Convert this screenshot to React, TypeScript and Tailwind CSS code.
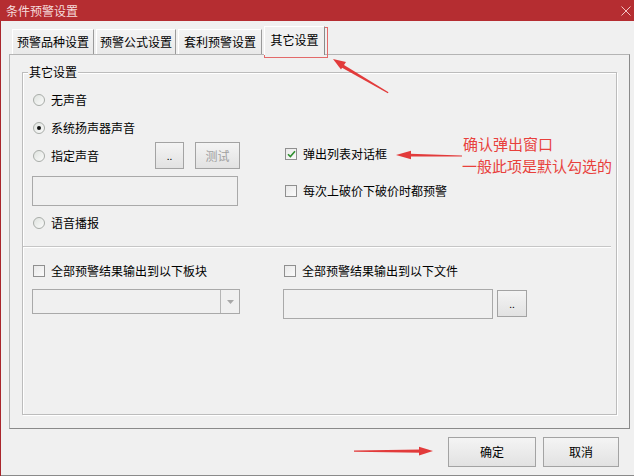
import React from 'react';

const font = "font-['Noto_Sans_CJK_SC','Microsoft_YaHei',sans-serif]";

function Radio({ label, checked = false }: { label: string; checked?: boolean }) {
  return (
    <div className="flex h-[20px] items-center gap-[6px]">
      <span className="flex h-[12px] w-[12px] items-center justify-center rounded-full border border-[#a8aca8] bg-linear-to-br from-[#dfe3df] to-[#fbfbfb]">
        {checked && <span className="h-[4px] w-[4px] rounded-full bg-[#111]" />}
      </span>
      <span>{label}</span>
    </div>
  );
}

function Check({ label, checked = false }: { label: string; checked?: boolean }) {
  return (
    <div className="flex h-[20px] items-center gap-[6px]">
      <span className="flex h-[12px] w-[12px] items-center justify-center border border-[#8f8f8f] bg-linear-to-br from-[#e9e9e9] to-[#fafafa]">
        {checked && (
          <svg width="9" height="8" viewBox="0 0 9 8">
            <path d="M1 4.2 L3.4 6.6 L8 1.2" fill="none" stroke="#2f8f2f" strokeWidth="1.6" />
          </svg>
        )}
      </span>
      <span>{label}</span>
    </div>
  );
}

function Btn({ children, className = '', disabled = false }: { children: React.ReactNode; className?: string; disabled?: boolean }) {
  return (
    <div
      className={`flex items-center justify-center border border-[#a3a3a3] bg-linear-to-b from-[#f4f4f4] to-[#e2e2e2] ${
        disabled ? 'text-[#a0a0a0]' : 'text-black'
      } ${className}`}
    >
      {children}
    </div>
  );
}

const tabs = [
  { name: '预警品种设置', w: 'w-[82px]' },
  { name: '预警公式设置', w: 'w-[80px]' },
  { name: '套利预警设置', w: 'w-[84px]' },
];

export default function App() {
  return (
    <div className={`relative flex h-[476px] w-[634px] flex-col overflow-hidden bg-[#f0f0f0] text-[12px] leading-[16px] text-black shadow-[inset_1px_0_0_#a9262c,inset_0_-1px_0_#8a8a8a] ${font}`}>
      {/* title bar */}
      <div className="flex h-[21px] items-center justify-between bg-[#b52d31] pl-[6px] pr-[2px]">
        <span className="text-[#f6dcdc]">条件预警设置</span>
        <svg width="10" height="10" viewBox="0 0 10 10" className="mr-[1px]">
          <path d="M0.5 0.5 L9.5 9.5 M9.5 0.5 L0.5 9.5" stroke="#f2c4c4" strokeWidth="1" />
        </svg>
      </div>

      {/* tabs */}
      <div className="flex h-[33px] items-end gap-[2px] pl-[12px]">
        {tabs.map((t) => (
          <div
            key={t.name}
            className={`flex h-[25px] ${t.w} items-center justify-center border-l border-r border-t border-l-white border-r-[#9a9a9a] border-t-white bg-linear-to-b from-[#f3f3f3] to-[#e9e9e9]`}
          >
            {t.name}
          </div>
        ))}
        <div className="relative z-10 mb-[-1px] flex h-[29px] w-[61px] items-center justify-center border-l border-r border-t border-l-white border-r-[#8a8a8a] border-t-white bg-[#f0f0f0] pb-[2px]">
          其它设置
        </div>
      </div>

      {/* tab panel */}
      <div className="ml-[9px] h-[375px] w-[621px] border border-[#b4b4b4] border-r-[#8a8a8a] border-b-[#8a8a8a] pl-[12px] pr-[12px] pt-[17px]">
        <div className="relative h-[343px] border border-[#bcbcbc] pl-[10px] pt-[17px] shadow-[inset_1px_1px_0_#fff,1px_1px_0_#fff]">
          <span className="absolute left-[5px] top-[-9px] bg-[#f0f0f0] px-[1px]">其它设置</span>

          <div className="flex">
            <div className="flex w-[252px] flex-col">
              <Radio label="无声音" />
              <div className="mt-[8px]">
                <Radio label="系统扬声器声音" checked />
              </div>
              <div className="mt-[4px] flex h-[27px] items-center">
                <div className="w-[122px]">
                  <Radio label="指定声音" />
                </div>
                <Btn className="h-[27px] w-[29px] text-[10px]">..</Btn>
                <Btn className="ml-[11px] h-[27px] w-[45px]" disabled>
                  测试
                </Btn>
              </div>
              <div className="ml-[-1px] mt-[7px] h-[30px] w-[206px] border border-[#a9a9a9] bg-[#f0f0f0]" />
              <div className="mt-[7px]">
                <Radio label="语音播报" />
              </div>
            </div>
            <div className="flex flex-col pt-[54px]">
              <Check label="弹出列表对话框" checked />
              <div className="mt-[17px]">
                <Check label="每次上破价下破价时都预警" />
              </div>
            </div>
          </div>

          <div className="ml-[-10px] mt-[13px] h-[2px] w-[588px] border-t border-b border-t-[#c6c6c6] border-b-white" />

          <div className="mt-[13px] flex">
            <div className="flex w-[251px] flex-col">
              <Check label="全部预警结果输出到以下板块" />
              <div className="ml-[-1px] mt-[8px] flex h-[25px] w-[208px] border border-[#a9a9a9] bg-[#f0f0f0]">
                <div className="flex-1" />
                <div className="flex w-[19px] items-center justify-center border-l border-[#b5b5b5]">
                  <svg width="7" height="4" viewBox="0 0 7 4">
                    <path d="M0 0 L7 0 L3.5 4 Z" fill="#a8a8a8" />
                  </svg>
                </div>
              </div>
            </div>
            <div className="flex flex-col">
              <Check label="全部预警结果输出到以下文件" />
              <div className="mt-[8px] flex items-start">
                <div className="ml-[-1px] h-[30px] w-[210px] border border-[#a9a9a9] bg-[#f0f0f0]" />
                <Btn className="ml-[4px] mt-[1px] h-[27px] w-[30px] text-[10px]">..</Btn>
              </div>
            </div>
          </div>
        </div>
      </div>

      {/* bottom buttons */}
      <div className="mt-[8px] flex justify-end gap-[7px] pr-[15px]">
        <Btn className="h-[30px] w-[88px] border-[#8f8f8f]">确定</Btn>
        <Btn className="h-[30px] w-[76px] border-[#8f8f8f]">取消</Btn>
      </div>

      {/* annotations */}
      <svg className="pointer-events-none absolute left-0 top-0" width="634" height="476" viewBox="0 0 634 476">
        <rect x="264.5" y="27.5" width="63" height="30" fill="none" stroke="#e36a6a" strokeWidth="1" />
        <polygon points="388.5,92.3 387.8,93.2 341.6,67.4 343.2,64.6" fill="#e23b3b" />
        <polygon points="333,59 346,62 341,69.5" fill="#e23b3b" />
        <polygon points="462,155.6 462,156.6 410,156.5 410,153.7" fill="#e23b3b" />
        <polygon points="396,155 411,150.8 411,159.2" fill="#e23b3b" />
        <polygon points="354,450.6 354,451.8 421,452.8 421,449.6" fill="#e23b3b" />
        <polygon points="433,451 419,446.8 419,455.4" fill="#e23b3b" />
      </svg>
      <div className="pointer-events-none absolute left-[462px] top-[133px] text-[15px] leading-[22px] text-[#e8403c]">
        <div className="pl-[1px]">确认弹出窗口</div>
        <div>一般此项是默认勾选的</div>
      </div>
    </div>
  );
}
